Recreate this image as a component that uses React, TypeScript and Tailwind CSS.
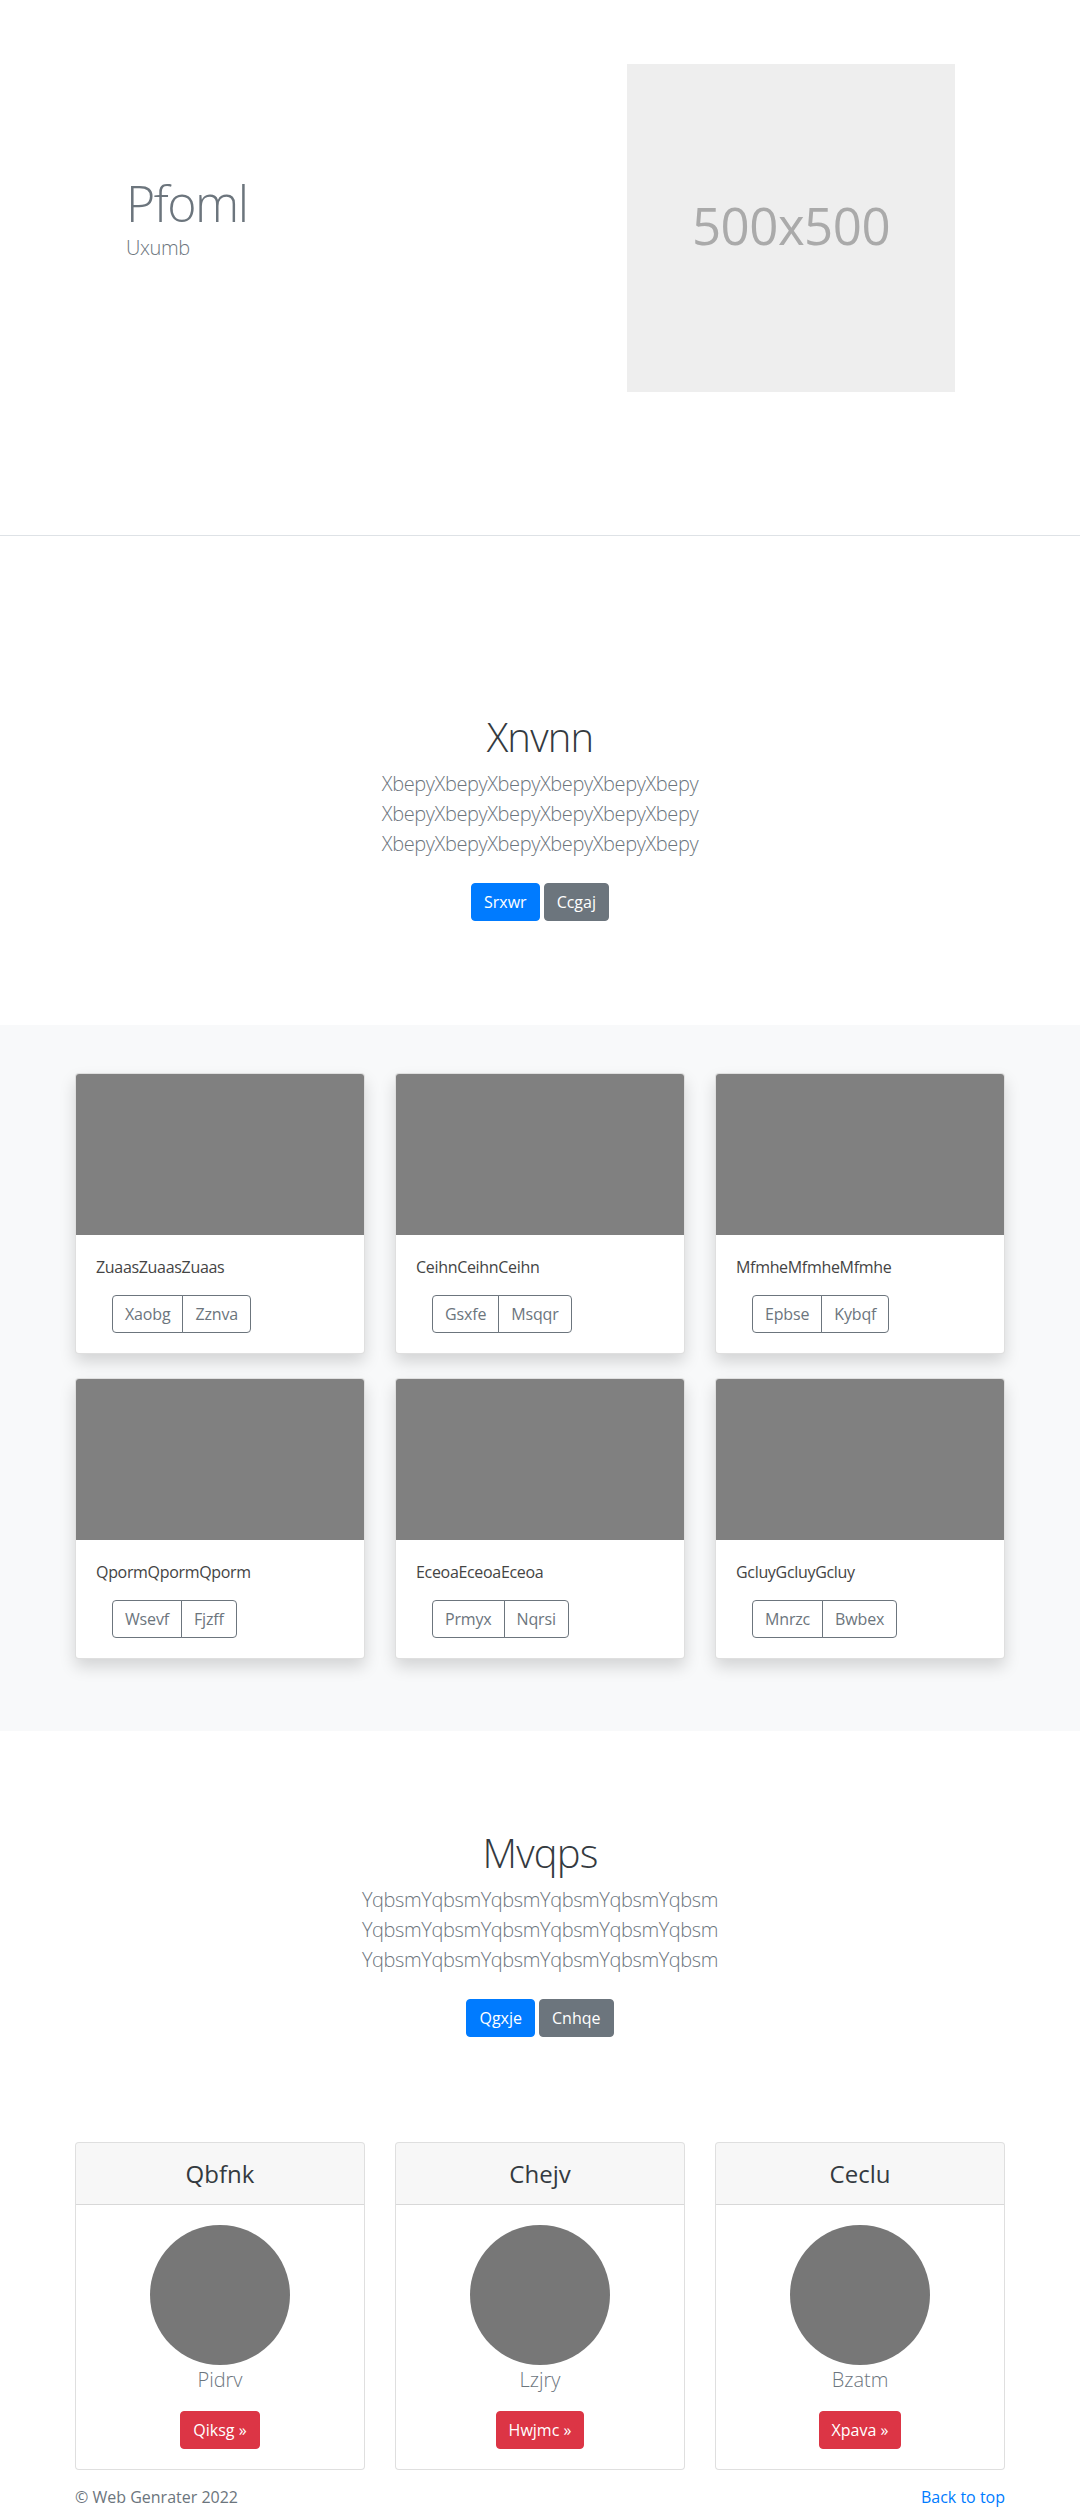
import React from "react";

const albumCards = [
  { text: "ZuaasZuaasZuaas", a: "Xaobg", b: "Zznva" },
  { text: "CeihnCeihnCeihn", a: "Gsxfe", b: "Msqqr" },
  { text: "MfmheMfmheMfmhe", a: "Epbse", b: "Kybqf" },
  { text: "QpormQpormQporm", a: "Wsevf", b: "Fjzff" },
  { text: "EceoaEceoaEceoa", a: "Prmyx", b: "Nqrsi" },
  { text: "GcluyGcluyGcluy", a: "Mnrzc", b: "Bwbex" },
];

const pricing = [
  { title: "Qbfnk", name: "Pidrv", btn: "Qiksg »" },
  { title: "Chejv", name: "Lzjry", btn: "Hwjmc »" },
  { title: "Ceclu", name: "Bzatm", btn: "Xpava »" },
];

function Lead({ word }: { word: string }) {
  const line = word.repeat(6);
  return (
    <p className="mb-4 text-[20px] font-light leading-[30px] tracking-[-0.02em] text-[#6c757d]">
      {line}
      <br />
      {line}
      <br />
      {line}
    </p>
  );
}

function Buttons({ a, b }: { a: string; b: string }) {
  return (
    <div className="flex justify-center gap-[4px] py-2">
      <button className="h-[38px] rounded-[4px] border border-[#007bff] bg-[#007bff] px-3 text-[16px] leading-[24px] text-white">
        {a}
      </button>
      <button className="h-[38px] rounded-[4px] border border-[#6c757d] bg-[#6c757d] px-3 text-[16px] leading-[24px] text-white">
        {b}
      </button>
    </div>
  );
}

export default function App() {
  return (
    <div className="w-[1080px] bg-white font-['Open_Sans',sans-serif] text-[#212529]">
      {/* Hero */}
      <section className="border-b border-[#dee2e6] pt-[64px] pb-[143px]">
        <div className="mx-auto flex w-[960px] items-center">
          <div className="w-[480px] pb-[20px] pl-[66px]">
            <h1 className="text-[50px] font-light leading-[60px] tracking-[-0.03em] text-[#6c757d]">
              Pfoml
            </h1>
            <p className="text-[20px] font-light leading-[30px] tracking-[-0.02em] text-[#6c757d]">
              Uxumb
            </p>
          </div>
          <div className="ml-[87px] flex h-[328px] w-[328px] items-center justify-center bg-[#eeeeee] pb-[5px] text-[51px] tracking-[-0.01em] text-[#aaaaaa]">
            500x500
          </div>
        </div>
      </section>

      {/* Jumbotron 1 */}
      <section className="pt-[177px] pb-[96px] text-center">
        <h1 className="mb-2 text-[40px] font-light leading-[48px] tracking-[-0.02em] text-[#343a40]">
          Xnvnn
        </h1>
        <Lead word="Xbepy" />
        <Buttons a="Srxwr" b="Ccgaj" />
      </section>

      {/* Album */}
      <section className="bg-[#f8f9fa] py-[48px]">
        <div className="mx-auto grid w-[930px] grid-cols-3 gap-x-[30px] gap-y-[24px] pb-[24px]">
          {albumCards.map((c) => (
            <div
              key={c.text}
              className="overflow-hidden rounded-[4px] border border-[rgba(0,0,0,0.125)] bg-white shadow-[0_8px_16px_rgba(0,0,0,0.15)]"
            >
              <div className="h-[161px] bg-[#808080]" />
              <div className="p-5">
                <p className="mb-4 text-[16px] leading-[24px] tracking-[-0.02em] text-[#444444]">
                  {c.text}
                </p>
                <div className="ml-4 inline-flex">
                  <button className="h-[38px] rounded-l-[4px] border border-[#6c757d] px-3 text-[16px] leading-[24px] tracking-[-0.01em] text-[#6c757d]">
                    {c.a}
                  </button>
                  <button className="-ml-px h-[38px] rounded-r-[4px] border border-[#6c757d] px-3 text-[16px] leading-[24px] tracking-[-0.01em] text-[#6c757d]">
                    {c.b}
                  </button>
                </div>
              </div>
            </div>
          ))}
        </div>
      </section>

      {/* Jumbotron 2 */}
      <section className="pt-[98px] pb-[97px] text-center">
        <h1 className="mb-2 text-[40px] font-light leading-[48px] tracking-[-0.02em] text-[#343a40]">
          Mvqps
        </h1>
        <Lead word="Yqbsm" />
        <Buttons a="Qgxje" b="Cnhqe" />
      </section>

      {/* Pricing */}
      <section>
        <div className="mx-auto grid w-[930px] grid-cols-3 gap-x-[30px]">
          {pricing.map((p) => (
            <div
              key={p.title}
              className="overflow-hidden rounded-[4px] border border-[rgba(0,0,0,0.125)] bg-white text-center"
            >
              <div className="border-b border-[rgba(0,0,0,0.125)] bg-[rgba(0,0,0,0.03)] px-5 py-4">
                <h4 className="text-[24px] leading-[29px] text-[#343a40]">{p.title}</h4>
              </div>
              <div className="flex flex-col items-center p-5">
                <div className="h-[140px] w-[140px] rounded-full bg-[#777777]" />
                <p className="mb-4 text-[20px] font-light leading-[30px] text-[#6c757d]">{p.name}</p>
                <button className="h-[38px] rounded-[4px] border border-[#dc3545] bg-[#dc3545] px-3 text-[16px] leading-[24px] text-white">
                  {p.btn}
                </button>
              </div>
            </div>
          ))}
        </div>
      </section>

      {/* Footer */}
      <footer className="mx-auto mt-[15px] flex w-[930px] justify-between pb-12 text-[16px] leading-[24px] text-[#6c757d]">
        <p>© Web Genrater 2022</p>
        <a className="text-[#007bff]" href="#">
          Back to top
        </a>
      </footer>
    </div>
  );
}
